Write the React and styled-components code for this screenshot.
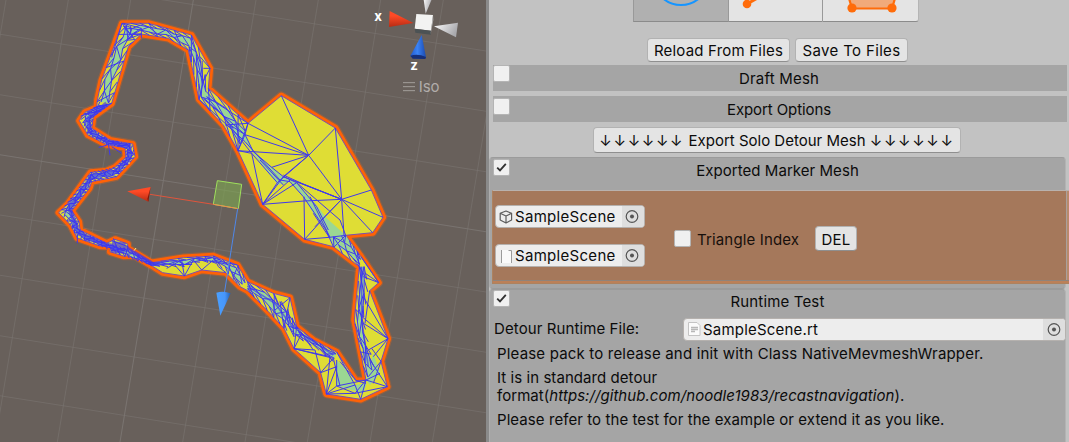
import React from "react";
import styled, { createGlobalStyle } from "styled-components";

const Global = createGlobalStyle`
  * { box-sizing: border-box; }
  html, body { margin: 0; background: #c2c2c2; }
  body { font: 15px/18px Inter, "Noto Sans", sans-serif; color: #0b0b0b; overflow: hidden; }
`;

const Editor = styled.div`
  display: flex;
  width: 1069px;
  height: 442px;
  overflow: hidden;
`;

const SceneView = styled.div`
  flex: 0 0 486px;
  height: 442px;
  background: #68605b;
  svg { display: block; }
`;

const Divider = styled.div`
  flex: 0 0 3px;
  background: #8a8a8a;
`;

const Inspector = styled.div`
  flex: 1;
  min-width: 0;
  background: #c2c2c2;
`;

const Toolbar = styled.div`
  display: flex;
  height: 22px;
  padding-left: 144px;
`;

const ToolButton = styled.div`
  width: ${(p) => p.$w}px;
  height: 22px;
  background: ${(p) => (p.$active ? "#b0b0b0" : "#e4e4e4")};
  border: solid #939393;
  border-width: 0 ${(p) => (p.$last ? 1 : 0)}px 1px 1px;
  border-color: #939393 #b5b5b5 #8b8b8b #999;
  border-bottom-right-radius: ${(p) => (p.$last ? 3 : 0)}px;
  svg { display: block; }
`;

const FileActions = styled.div`
  display: flex;
  gap: 5px;
  padding: 16px 0 0 158px;
  height: 43px;
`;

const Button = styled.div`
  width: ${(p) => p.$w}px;
  height: ${(p) => p.$h || 24}px;
  background: #e4e4e4;
  border: 1px solid #b2b2b2;
  border-bottom-color: #8f8f8f;
  border-radius: 4px;
  text-align: center;
  line-height: ${(p) => p.$lh || 24}px;
  letter-spacing: ${(p) => p.$ls ?? 0.3}px;
  white-space: nowrap;
`;

const Arrows = styled.span`
  letter-spacing: 1.65px;
`;

const HeaderBar = styled.div`
  display: flex;
  width: 574px;
  height: 26px;
  margin: 0 0 5px 4px;
  background: #a5a5a5;
`;

const SectionHead = styled.div`
  display: flex;
  padding-left: 3px;
  width: 574px;
  height: ${(p) => p.$h}px;
`;

const Title = styled.div`
  flex: 1;
  text-align: center;
  margin-left: -19px;
  line-height: ${(p) => p.$lh || 27}px;
  letter-spacing: ${(p) => p.$ls ?? 0.3}px;
`;

const Check = styled.div`
  flex: 0 0 17px;
  height: 17px;
  margin-top: ${(p) => p.$top || 0}px;
  background: #f0f0f0;
  border: 1px solid #b4b4b4;
  border-radius: 2px;
  svg { display: block; }
`;

const ExportRow = styled.div`
  height: 30px;
  padding-left: 104px;
`;

const Section = styled.div`
  width: 577px;
  height: ${(p) => p.$h}px;
  background: #a5a5a5;
  border: 1px solid #9b9b9b;
  border-left-color: #adadad;
  border-right-color: #b3b3b3;
  border-radius: 4px;
`;

const MarkerCard = styled.div`
  display: flex;
  width: 578px;
  height: 94px;
  margin-left: 2px;
  background: #a5785b;
  border: 1px solid #ad825f;
  border-top-color: #b9b2ae;
  box-shadow: inset 0 -2px #bc8058, inset 0 -3px #8f837b, inset -2px 0 #b98a6c, inset -3px 0 #a9a19c;
`;

const Fields = styled.div`
  display: flex;
  flex-direction: column;
  gap: 16px;
  padding: 14px 0 0 2px;
`;

const ObjectField = styled.div`
  display: flex;
  flex: none;
  align-items: center;
  width: ${(p) => p.$w}px;
  height: 23px;
  padding-left: 3px;
  background: #ededed;
  border: 1px solid #b5b1ae;
  border-radius: 4px;
  overflow: hidden;
  span { flex: 1; line-height: 23px; letter-spacing: ${(p) => p.$ls ?? 0.3}px; white-space: nowrap; padding-left: 1px; }
`;

const Picker = styled.div`
  flex: 0 0 22px;
  height: 21px;
  background: #dedede;
  svg { display: block; }
`;

const IndexToggle = styled.div`
  display: flex;
  padding: 39px 0 0 29px;
  width: 170px;
  color: #160f0b;
  span { line-height: 19px; margin-left: 6px; letter-spacing: 0.15px; white-space: nowrap; }
`;

const DeleteSlot = styled.div`
  padding-top: 35px;
`;

const FileRow = styled.div`
  display: flex;
  align-items: center;
  padding-left: 4px;
  height: 22px;
  margin-bottom: 1px;
  label { flex: 0 0 189px; letter-spacing: 0.1px; }
`;

const Notes = styled.div`
  padding: 4px 0 0 7px;
`;

const Note = styled.p`
  margin: 0 0 6px;
  white-space: nowrap;
  letter-spacing: ${(p) => p.$ls}px;
`;

const Tick = () => (
  <svg width="15" height="15" viewBox="0 0 15 15">
    <path d="M3.2 7.6 L6 10.4 L11.8 3.8" fill="none" stroke="#303030" strokeWidth="1.8" />
  </svg>
);

const Target = ({ cx = 10 }) => (
  <svg width="22" height="21" viewBox="0 0 22 21">
    <circle cx={cx} cy="10.5" r="5.8" fill="none" stroke="#555" strokeWidth="1.2" />
    <circle cx={cx} cy="10.5" r="2" fill="#555" />
  </svg>
);

const CubeIcon = () => (
  <svg width="15" height="16" viewBox="0 0 15 16" fill="none" stroke="#5c5c5c" strokeWidth="1.2" strokeLinejoin="round">
    <path d="M7 2 L12.6 4.3 V11 L7 14 L1.2 11 V4.3 Z M1.2 4.3 L7 7 L12.6 4.3 M7 7 V14" />
  </svg>
);

const PageIcon = () => (
  <svg width="15" height="16" viewBox="0 0 15 16">
    <path d="M2 2 H10 L13 5 V15 H2 Z" fill="#fafafa" />
    <path d="M2.5 2 V15 M9.5 2.5 H12.5 V15" fill="none" stroke="#9b9b9b" />
  </svg>
);

const DocIcon = () => (
  <svg width="15" height="16" viewBox="0 0 15 16">
    <path d="M1.5 1.5 H10 L13 4.5 V14.5 H1.5 Z" fill="#fbfbfb" stroke="#c4c4c4" />
    <path d="M4 6.5 H11 M4 8.5 H11 M4 10.5 H8" stroke="#b8b8b8" strokeWidth="1.4" />
  </svg>
);

const OUTER = [[366,70],[446,70],[574,105],[630,205],[625,265],[744,370],[844,287],[1006,384],[1114,570],[1149,652],[1118,698],[1037,706],[1083,770],[1136,848],[1109,872],[1164,1016],[1143,1084],[1162,1160],[1082,1198],[979,1182],[962,1118],[882,1046],[852,985],[815,945],[743,872],[720,860],[678,818],[605,810],[553,828],[488,818],[455,797],[405,767],[370,768],[330,755],[332,740],[300,738],[232,714],[212,675],[176,638],[203,612],[248,550],[272,517],[320,513],[345,502],[378,472],[375,443],[320,434],[264,405],[238,362],[255,337],[290,322],[292,300],[305,240],[330,172]];
const INNER = [[335,310],[280,350],[275,385],[330,420],[398,432],[405,470],[350,530],[275,545],[268,565],[215,632],[237,665],[240,690],[320,730],[345,718],[383,732],[383,745],[455,788],[550,773],[640,768],[712,795],[742,845],[820,880],[870,893],[890,980],[940,1020],[1010,1056],[1068,1142],[1098,1140],[1063,960],[1078,800],[1000,740],[914,718],[788,613],[714,452],[670,375],[597,298],[565,150],[505,115],[424,102],[385,140]];

const toPath = (pts) => "M" + pts.map((p) => p.join(" ")).join("L") + "Z";
const RING = toPath(OUTER) + toPath(INNER);

// Walks a polyline and returns n + 1 evenly spaced points.
function resample(pts, n) {
  const len = [0];
  for (let i = 1; i < pts.length; i++) len.push(len[i - 1] + Math.hypot(pts[i][0] - pts[i - 1][0], pts[i][1] - pts[i - 1][1]));
  const out = [];
  for (let k = 0; k <= n; k++) {
    const d = (len[len.length - 1] * k) / n;
    let i = 1;
    while (i < pts.length - 1 && len[i] < d) i++;
    const t = (d - len[i - 1]) / (len[i] - len[i - 1] || 1);
    out.push([pts[i - 1][0] + (pts[i][0] - pts[i - 1][0]) * t, pts[i - 1][1] + (pts[i][1] - pts[i - 1][1]) * t]);
  }
  return out;
}

// Triangulates the strip between two edges, with two wandering inner rails.
function strip(a, b, n) {
  const A = resample(a, n);
  const B = resample(b, n);
  const mix = (i, t) => [A[i][0] + (B[i][0] - A[i][0]) * t, A[i][1] + (B[i][1] - A[i][1]) * t].map((v) => v.toFixed(1));
  const railA = A.map((_, i) => mix(i, 0.26 + 0.08 * Math.sin(i * 2.3)));
  const railB = A.map((_, i) => mix(i, 0.7 + 0.08 * Math.cos(i * 1.7)));
  let edges = "M" + railA.join("L") + "M" + railB.join("L");
  for (let i = 0; i < n; i++) {
    const zig = i % 2;
    edges += `M${mix(i, 0)}L${railA[i + 1]}M${zig ? railA[i] : railB[i]}L${zig ? railB[i + 1] : railA[i + 1]}M${railB[i]}L${mix(i + 1, 1)}`;
    if (i % 3 === 0) edges += `M${mix(i, 0)}L${mix(i + 1, 1)}`;
  }
  const core = "M" + railA.concat([...railB].reverse()).join("L") + "Z";
  return { edges, core };
}

const STRIPS = [
  strip([[292,305],[305,240],[330,172],[366,70]], [[335,310],[352,245],[385,140],[424,102]], 7),
  strip([[366,70],[446,70],[574,105]], [[385,135],[424,102],[505,115],[565,150]], 8),
  strip([[574,105],[600,150],[610,200],[625,265]], [[565,150],[575,190],[585,240],[597,298]], 4),
  strip([[625,265],[744,370]], [[597,298],[670,375],[714,452]], 4),
  strip([[335,310],[280,350],[275,385],[330,420],[398,432],[405,470],[350,530],[275,545]], [[290,318],[240,350],[264,405],[320,434],[375,443],[378,472],[345,502],[272,517]], 34),
  strip([[275,545],[268,565],[215,632],[237,665],[240,690],[320,730],[383,745],[455,788]], [[272,517],[248,550],[180,635],[210,675],[232,714],[300,738],[370,768],[455,797]], 34),
  strip([[455,788],[550,773],[640,768],[712,795],[742,845]], [[455,797],[500,800],[553,800],[605,785],[650,790],[720,856]], 12),
  strip([[742,845],[820,880],[860,920],[890,980]], [[743,872],[815,945],[852,985],[882,1010]], 7),
  strip([[890,980],[940,1020],[1010,1056]], [[886,1010],[950,1045],[1000,1085]], 5),
  strip([[1078,800],[1074,880],[1063,960],[1098,1140]], [[1096,800],[1104,872],[1090,960],[1122,1100]], 8),
  strip([[1037,706],[1083,770]], [[990,712],[1000,740],[1078,800]], 4),
];

const CORES = [
  "M690 378L735 400L760 455L815 502L850 530L890 548L930 590L980 655L1037 706L1080 775L1000 735L978 690L940 640L910 590L870 545L835 555L790 500L735 425Z",
  "M1010 1080L1035 1105L1065 1155L1100 1150L1090 1180L1010 1158Z",
  "M1120 1060L1140 1120L1110 1155L1098 1140Z",
  "M330 175L360 155L345 205L333 230Z",
];

const WIRES = "M844 287L926 466L1006 384L1025 598L1114 570M926 466L1025 598L1149 652M1025 598L1118 698M1025 598L1032 706M1025 598L945 680M1025 598L890 545M1025 598L850 530M1025 598L975 650L914 718M1025 598L912 603L788 613M926 466L744 370M926 466L735 404M926 466L714 452M926 466L815 502M926 466L850 530M926 466L832 548M744 370L714 452M744 370L675 375M735 404L714 452M735 404L690 375M744 370L735 404L760 455L815 502L850 530L890 548L1020 660L1037 706M714 452L755 460L788 613L832 548L755 460M788 613L850 530M788 613L890 548M788 613L870 540M690 378L755 460M735 425L840 540L870 545L910 590L978 690L1000 740M912 590L914 718L988 712L1037 706M930 590L990 712M890 548L950 620L985 690M850 525L905 550L1025 598M780 480L850 555M988 712L940 640M620 290L744 370M612 295L735 404M620 290L700 385M597 298L735 425M610 205L630 205M600 170L630 205L607 250L590 165M1096 820L1136 848L1083 770M1090 830L1136 848M1090 890L1164 1016L1086 950M1090 970L1164 1016L1105 1050M1120 1070L1164 1016M1109 872L1095 970M1143 1084L1115 1045M1110 1080L1162 1160L1098 1140M1120 1150L1143 1084L1105 1130M1162 1160L1065 1180L979 1182M1098 1140L1082 1198L1065 1155M1098 1140L1010 1158L979 1182M1065 1155L979 1182L1010 1100L962 1118L1000 1075L882 1046L990 1070M882 1046L945 1050L962 1118M990 1070L979 1182M1010 1080L1010 1158L1065 1180L1098 1140L1140 1120M1010 1056L1065 1155M1020 1085L1068 1142L1098 1150M1000 1075L1020 1158M890 980L882 1046L905 1000L940 1050M870 893L825 930M870 893L852 985L840 905L890 980M820 880L835 915M715 795L700 830L712 850M640 768L655 800L678 818M605 810L580 780L553 828L545 780L500 805M553 828L520 790M605 810L640 780L712 795M370 78L392 105L424 85L370 70M392 78V105M366 70L335 172";

const verticals = [-170, 18, 205, 392, 580, 768, 955, 1142, 1330, 1517, 1704];
const horizontals = [-78, 103, 284, 464, 645, 826, 1007, 1187, 1368];

const Scene = () => (
  <svg width="486" height="442" viewBox="0 0 1458 1326">
    <defs>
      <linearGradient id="redCone" x1="0" y1="0" x2="0" y2="1"><stop offset="0.3" stopColor="#ff4a26" /><stop offset="1" stopColor="#b62c14" /></linearGradient>
      <linearGradient id="whiteCone" x1="0" y1="0" x2="1" y2="0.4"><stop offset="0" stopColor="#fff" /><stop offset="1" stopColor="#a9a9ad" /></linearGradient>
      <linearGradient id="blueCone"><stop offset="0" stopColor="#2158cc" /><stop offset="0.45" stopColor="#3a83f5" /><stop offset="1" stopColor="#1c4aae" /></linearGradient>
      <linearGradient id="azureCone"><stop offset="0" stopColor="#4aa0ff" /><stop offset="0.6" stopColor="#4796fb" /><stop offset="1" stopColor="#255fae" /></linearGradient>
    </defs>
    <g stroke="#7b7672" strokeWidth="3.2">
      {verticals.map((x) => <line key={x} x1={x} y1="0" x2={x - 220} y2="1326" strokeOpacity={x === 580 ? 0.9 : 0.55} />)}
      {horizontals.map((y) => <line key={y} x1="0" y1={y} x2="1458" y2={y + 231} strokeOpacity={y === 464 ? 0.9 : 0.55} />)}
    </g>
    <g strokeLinejoin="round">
      <path d={RING} fill="none" stroke="#f26411" strokeWidth="26" opacity="0.3" />
      <path d={RING} fill="none" stroke="#ff6206" strokeWidth="19" />
      <path d={RING} fill="#dfdd35" fillRule="evenodd" stroke="#7a50b0" strokeWidth="3" />
      <g fill="#9bd793">
        {STRIPS.map((s, i) => <path key={i} d={s.core} />)}
        {CORES.map((d) => <path key={d} d={d} />)}
      </g>
      <g fill="none" stroke="#4038ee" strokeWidth="3">
        {STRIPS.map((s, i) => <path key={i} d={s.edges} />)}
        <path d={WIRES} />
        <path d="M325 430L330 466M320 436L296 442M335 440L365 460M232 705V730M335 722L385 740M330 735L380 755M335 752L375 745M340 715L360 765M424 85V115M292 322L300 305" />
      </g>
      <g fill="none" stroke="#3b33f2" strokeWidth="13" opacity="0.65">
        <path d="M320 310L265 355L268 395L325 427L388 438L390 472L348 515L275 530L208 625L225 670L235 700L320 735L380 745L455 790" />
        <path d="M335 740L375 745" strokeWidth="34" />
        <path d="M742 858L825 910L880 985M895 995L1000 1065M1085 800V960L1105 1100" strokeWidth="5" />
      </g>
    </g>
    <g fill="none" strokeWidth="3">
      <path d="M652 542L725 553L715 626L640 613Z" fill="#7fa850" fillOpacity="0.6" stroke="#9fe05c" />
      <path d="M640 613L715 626" stroke="#f08a4a" />
      <path d="M450 583L640 613" stroke="#e0553c" />
      <path d="M713 626L673 880" stroke="#4f88ea" />
      <path d="M402 752L408 744M387 492V486" stroke="#f1ee8a" />
    </g>
    <path d="M382 574L452 561L445 605Z" fill="url(#redCone)" />
    <path d="M452 561L445 605L442 597Z" fill="#7c1c0c" />
    <path d="M649 878Q670 871 692 880L661 947Z" fill="url(#azureCone)" />
    <path d="M1169 33L1240 69L1167 81Z" fill="url(#redCone)" />
    <path d="M1270 -8L1296 -4L1277 41Z" fill="url(#whiteCone)" />
    <path d="M1302 79L1374 68L1368 112Z" fill="url(#whiteCone)" />
    <path d="M1249 42L1299 45L1293 92L1244 86Z" fill="#f3f3f2" />
    <path d="M1244 86L1293 92L1292 104L1246 98Z" fill="#4c5254" />
    <path d="M1299 45L1293 92L1292 102L1300 60Z" fill="#b8b8b8" />
    <path d="M1265 105L1278 172Q1254 182 1231 168Z" fill="url(#blueCone)" />
    <path d="M1231 167Q1254 160 1278 171L1276 177L1238 176Z" fill="#162f78" />
    <path d="M1209 248H1245M1209 260H1245M1209 272H1245" stroke="#a39e9b" strokeWidth="3" />
    <g fontFamily="Inter, sans-serif">
      <text x="1123" y="62" fontSize="40" fontWeight="700" fill="#fff">x</text>
      <text x="1231" y="209" fontSize="40" fontWeight="700" fill="#fff">z</text>
      <text x="1256" y="276" fontSize="45" fill="#b1adaa">Iso</text>
    </g>
  </svg>
);

export default function App() {
  return (
    <Editor>
      <Global />
      <SceneView><Scene /></SceneView>
      <Divider />
      <Inspector>
        <Toolbar>
          <ToolButton $w={95} $active>
            <svg width="94" height="21"><circle cx="47" cy="-23" r="28" fill="none" stroke="#1695ff" strokeWidth="2" /></svg>
          </ToolButton>
          <ToolButton $w={94}>
            <svg width="93" height="21"><path d="M18 4L32 -4" stroke="#ff6c0a" strokeWidth="3" /><circle cx="18" cy="4" r="4.3" fill="#ff6c0a" /></svg>
          </ToolButton>
          <ToolButton $w={97} $last>
            <svg width="95" height="21"><path d="M25 -5L29 8.5H69L73 -5" fill="#f1aa7a" stroke="#ff6c0a" strokeWidth="2.2" /><circle cx="29" cy="8" r="4.6" fill="#ff6c0a" /><circle cx="69" cy="8" r="4.6" fill="#ff6c0a" /></svg>
          </ToolButton>
        </Toolbar>
        <FileActions>
          <Button $w={143} $ls={0.2}>Reload From Files</Button>
          <Button $w={113} $ls={0.35}>Save To Files</Button>
        </FileActions>
        <HeaderBar><Check /><Title $ls={0.2}>Draft Mesh</Title></HeaderBar>
        <HeaderBar><Check $top={2} /><Title $ls={-0.1}>Export Options</Title></HeaderBar>
        <ExportRow>
          <Button $w={368} $h={26} $ls={0} $lh={25}><Arrows>↓↓↓↓↓↓</Arrows> Export Solo Detour Mesh <Arrows>↓↓↓↓↓↓</Arrows></Button>
        </ExportRow>
        <Section $h={132}>
          <SectionHead $h={32}><Check $top={1}><Tick /></Check><Title $lh={26} $ls={0.05}>Exported Marker Mesh</Title></SectionHead>
          <MarkerCard>
            <Fields>
              <ObjectField $w={150}><CubeIcon /><span>SampleScene</span><Picker><Target /></Picker></ObjectField>
              <ObjectField $w={150}><PageIcon /><span>SampleScene</span><Picker><Target /></Picker></ObjectField>
            </Fields>
            <IndexToggle><Check /><span>Triangle Index</span></IndexToggle>
            <DeleteSlot><Button $w={42} $h={25} $lh={26}>DEL</Button></DeleteSlot>
          </MarkerCard>
        </Section>
        <Section $h={170}>
          <SectionHead $h={28}><Check><Tick /></Check><Title $lh={24} $ls={0.15}>Runtime Test</Title></SectionHead>
          <FileRow><label>Detour Runtime File:</label><ObjectField $w={383} $ls={0.2}><DocIcon /><span>SampleScene.rt</span><Picker><Target cx={11} /></Picker></ObjectField></FileRow>
          <Notes>
            <Note $ls={0.18}>Please pack to release and init with Class NativeMevmeshWrapper.</Note>
            <Note $ls={0.06}>It is in standard detour<br />format(<i>https://github.com/noodle1983/recastnavigation</i>).</Note>
            <Note $ls={0.075}>Please refer to the test for the example or extend it as you like.</Note>
          </Notes>
        </Section>
      </Inspector>
    </Editor>
  );
}
